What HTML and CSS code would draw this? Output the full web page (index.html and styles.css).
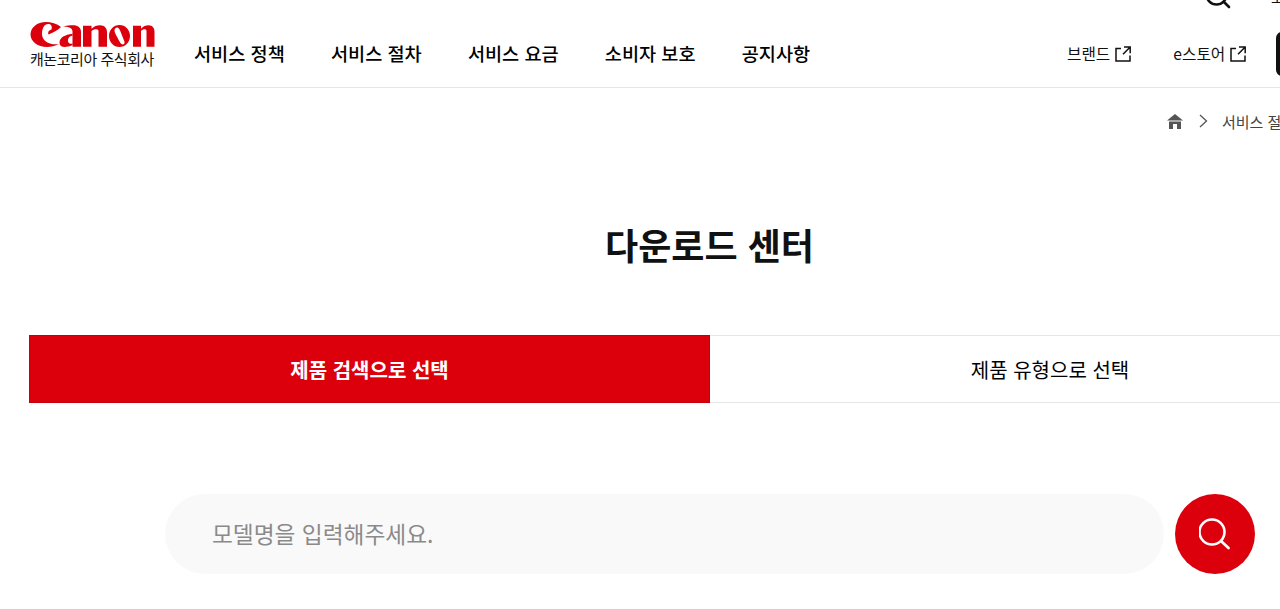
FILE: index.html
```html
<!DOCTYPE html>
<html lang="ko">
<head>
<meta charset="utf-8">
<title>다운로드 센터</title>
<link rel="stylesheet" href="styles.css">
</head>
<body>
<div class="page">
  <header class="header">
    <a class="logo">
      <svg class="logo-mark" viewBox="0 0 125 26" width="125" height="26" aria-label="Canon">
        <path fill="#dc000c" d="M31 5C27 1.500 21 0 16 0C7 0 0.500 5.500 0.500 12.500C0.500 19.500 8 25 17 25C21 25 25 24 29 22C20 23.500 12 19.500 12 12C12 6 14.500 2 18 2C21 2 22.500 4 21.500 7.500C19 8 17.500 10 18.500 12.500C23 11 28 8 31 5Z"/>
        <g transform="matrix(1 0 0 1.137 0 -1.900)">
          <path fill="#dc000c" d="M33 6C36 4.500 40 4.500 43 4.500C48 4.500 51 6.500 51 10.500V23.500H42.500V10C42.500 7 38 5.500 33 6Z"/>
          <path fill="#dc000c" d="M42.500 12C35 13 29.500 15 29.500 20C29.500 24 35 25 42.500 22V20.500C39 21.500 37.500 19.500 38 17C38.500 15 40.500 14 42.500 13.500Z"/>
          <path fill="#dc000c" d="M53 5H61.500V7.500C64 5.500 67 4.500 70 4.500C74.500 4.500 77 7 77 10.500V23.500H68.500V9.500C68.500 7.500 64 7.500 61.500 9.500V23.500H53Z"/>
          <path fill="#dc000c" fill-rule="evenodd" d="M89.500 4.300C83.700 4.300 79 8.600 79 14C79 19.400 83.700 23.700 89.500 23.700C95.300 23.700 100 19.400 100 14C100 8.600 95.300 4.300 89.500 4.300ZM85 7.500C87 5.500 89 6.500 90.500 10L94.500 19C95 21 93 22 91.500 21C90 20 88 16 86 13C84.500 10.500 84 8.500 85 7.500Z"/>
          <path fill="#dc000c" d="M103 5H111V7.500C113 5.500 116 4.500 118.500 4.500C122.500 4.500 124.500 7 124.500 10.500V23.500H116.500V9.500C116.500 7.500 113 7.500 111 9.500V23.500H103Z"/>
        </g>
      </svg>
      <span class="logo-text">캐논코리아 주식회사</span>
    </a>
    <nav class="gnb">
      <a>서비스 정책</a>
      <a>서비스 절차</a>
      <a>서비스 요금</a>
      <a>소비자 보호</a>
      <a>공지사항</a>
    </nav>
    <div class="ext">
      <a>브랜드
        <svg class="ext-icon" viewBox="0 0 16 16" width="16" height="16"><path d="M6 2.500H1V15H15V9.500M9 1H15.200V7.200M15.200 1L8 8.200" fill="none" stroke="#111" stroke-width="1.500"/></svg>
      </a>
      <a>e스토어
        <svg class="ext-icon" viewBox="0 0 16 16" width="16" height="16"><path d="M6 2.500H1V15H15V9.500M9 1H15.200V7.200M15.200 1L8 8.200" fill="none" stroke="#111" stroke-width="1.500"/></svg>
      </a>
      <span class="login"></span>
    </div>
    <svg class="top-search" viewBox="0 0 26 26" width="26" height="26"><circle cx="11.500" cy="11.500" r="10" fill="none" stroke="#111" stroke-width="2.600"/><path d="M19 19l5 5" stroke="#111" stroke-width="2.600" stroke-linecap="round"/></svg>
    <span class="top-link">고객</span>
  </header>

  <div class="crumbs">
    <svg class="home" viewBox="0 0 16 15" width="16" height="15"><path fill="#555" d="M8 0L0 6.500H16Z"/><path fill="#555" d="M2 7.500H14V15H10V10H6V15H2Z"/></svg>
    <svg class="chev" viewBox="0 0 9 14" width="9" height="14"><path d="M1 1l6.500 6L1 13" fill="none" stroke="#555" stroke-width="1.300"/></svg>
    <span>서비스 절차</span>
  </div>

  <h1 class="title">다운로드 센터</h1>

  <div class="tabs">
    <a class="tab active">제품 검색으로 선택</a>
    <a class="tab">제품 유형으로 선택</a>
  </div>

  <form class="search">
    <input class="search-input" type="text" placeholder="모델명을 입력해주세요.">
    <button class="search-btn" type="button" aria-label="검색">
      <svg viewBox="0 0 32 32" width="32" height="32"><circle cx="13" cy="14" r="12.500" fill="none" stroke="#fff" stroke-width="2.600"/><path d="M22.500 23.500L29.500 30" stroke="#fff" stroke-width="2.800" stroke-linecap="round"/></svg>
    </button>
  </form>
</div>
</body>
</html>
```
FILE: styles.css
```css
html, body {
  margin: 0;
  padding: 0;
  height: 609px;
  overflow: hidden;
  background: #fff;
}
body, input, button {
  font-family: "Noto Sans CJK KR", "Noto Sans", sans-serif;
}
.page {
  width: 1420px;
  color: #111;
}
.header {
  position: relative;
  display: flex;
  align-items: flex-start;
  height: 87px;
  padding-left: 30px;
  border-bottom: 1px solid #e6e6e6;
  box-sizing: content-box;
}
.logo {
  display: flex;
  flex-direction: column;
  width: 125px;
  padding-top: 22px;
}
.logo-mark { display: block; }
.logo-text {
  font-size: 15px;
  line-height: 16px;
  margin-top: 3px;
  white-space: nowrap;
  letter-spacing: -0.45px;
}
.gnb {
  display: flex;
  gap: 46.2px;
  margin-left: 39px;
  padding-top: 39px;
  font-size: 18.6px;
  line-height: 28px;
  font-weight: 500;
  color: #000;
}
.ext {
  position: absolute;
  left: 1067px;
  top: 32px;
  display: flex;
  font-size: 15.7px;
  line-height: 44px;
}
.ext a {
  display: flex;
  align-items: center;
  gap: 5px;
  margin-right: 42px;
}
.ext-icon { display: block; }
.login {
  display: block;
  width: 100px;
  height: 44px;
  margin-left: -12px;
  border-radius: 6px;
  background: #111;
}
.top-search {
  position: absolute;
  left: 1205px;
  top: -17px;
}
.top-link {
  position: absolute;
  left: 1271px;
  top: -14px;
  font-size: 15px;
  line-height: 22px;
}
.crumbs {
  display: flex;
  align-items: center;
  height: 20px;
  padding: 23px 0 0 1167px;
  font-size: 15px;
  color: #444;
  white-space: nowrap;
}
.chev { margin-left: 16px; margin-right: 14px; }
.title {
  margin: 87px 0 0 29px;
  width: 1361px;
  text-align: center;
  font-size: 36px;
  line-height: 52px;
  font-weight: 700;
  color: #111;
}
.tabs {
  display: flex;
  margin: 65px 0 0 29px;
  width: 1361px;
}
.tab {
  flex: 1;
  height: 68px;
  box-sizing: border-box;
  display: flex;
  align-items: center;
  justify-content: center;
  font-size: 20px;
  font-weight: 400;
  color: #000;
  border-top: 1px solid #e6e6e6;
  border-bottom: 1px solid #e6e6e6;
}
.tab.active {
  flex: 0 0 681px;
  background: #dc000c;
  color: #fff;
  border: 1px solid #c4000a;
  font-weight: 700;
}
.search {
  display: flex;
  align-items: center;
  gap: 11px;
  margin: 91px 0 0 165px;
}
.search-input {
  width: 999px;
  height: 80px;
  box-sizing: border-box;
  padding: 0 47px 1px;
  border: 0;
  border-radius: 40px;
  background: #f9f9f9;
  font-size: 22.7px;
  outline: none;
}
.search-input::placeholder { color: #8a8a8a; opacity: 1; }
.search-btn {
  width: 80px;
  height: 80px;
  padding: 0;
  border: 0;
  border-radius: 50%;
  background: #dc000c;
  display: flex;
  align-items: center;
  justify-content: center;
}
```
